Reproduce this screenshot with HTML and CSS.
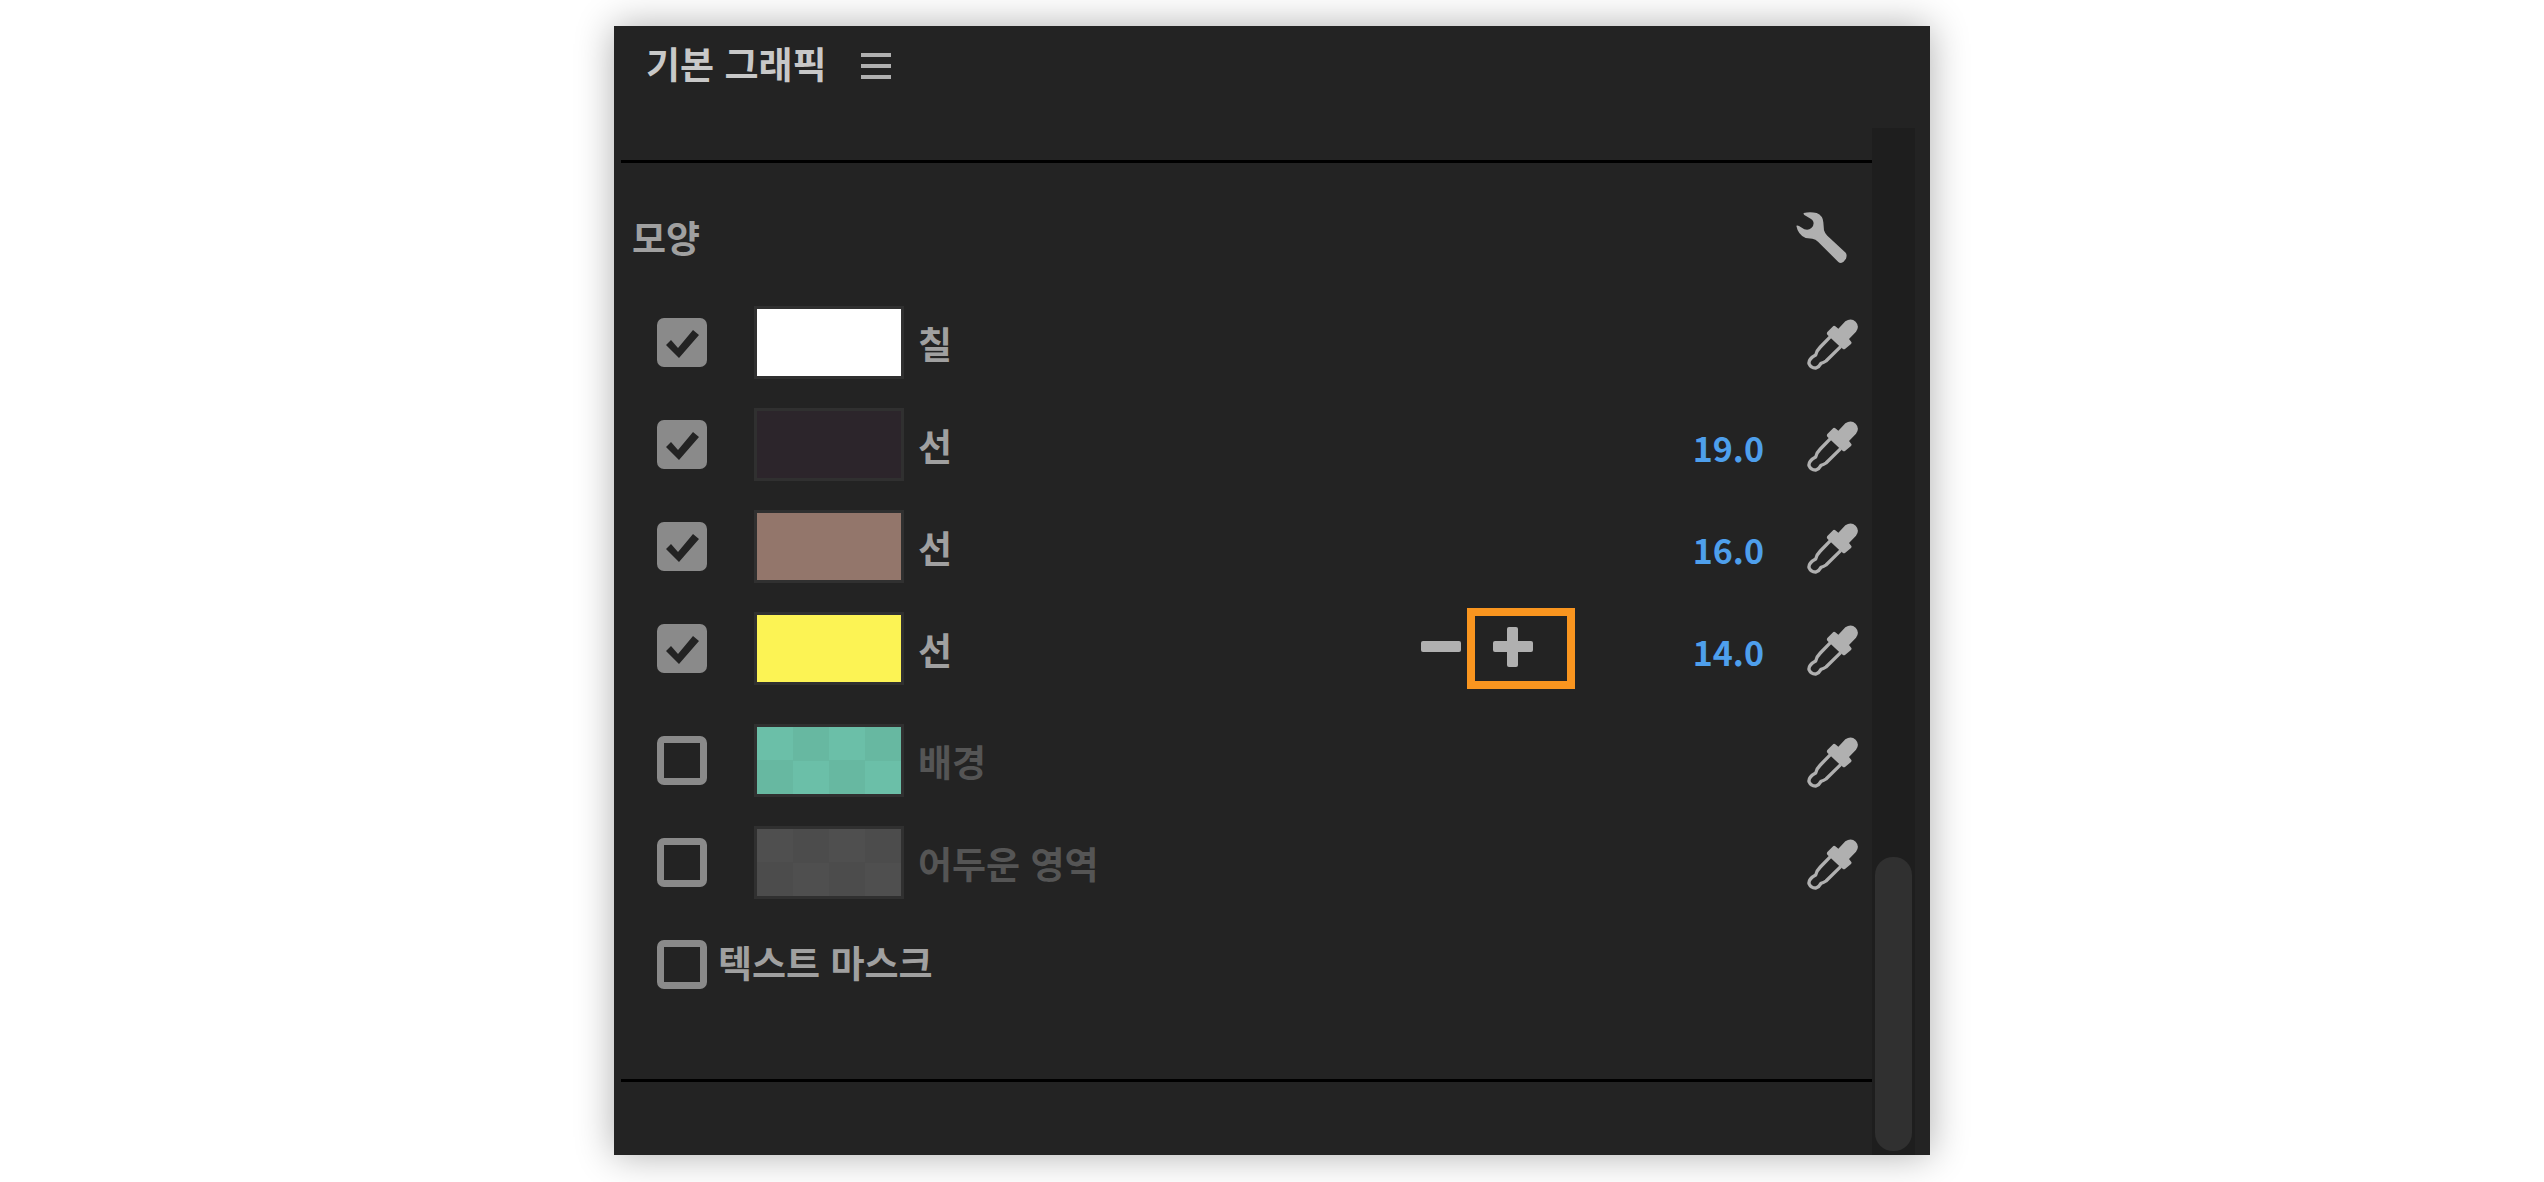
FILE: index.html
```html
<!DOCTYPE html>
<html lang="ko">
<head>
  <meta charset="UTF-8">
  <title>기본 그래픽</title>
  <link rel="stylesheet" href="styles.css">
</head>
<body>
  <svg class="sprite" aria-hidden="true">
    <symbol id="icon-dropper" viewBox="0 0 153 153">
      <path d="M71 52 L40 84 Q28 96 26 108 Q4 120 6 134 Q12 148 27 147 Q36 144 42 133 Q50 131 57 126 L101 83" fill="none" stroke="currentColor" stroke-width="10" stroke-linejoin="round"/>
      <path d="M61 39 L79 21 Q82 19 85 22 L94 29 L115 7 Q132 -5 146 8 Q159 22 147 38 L126 60 L133 69 Q135 72 132 75 L114 90 Q110 92 107 89 L96 80 L72 58 L61 47 Q58 43 61 39 Z" fill="currentColor"/>
    </symbol>
    <symbol id="icon-wrench" viewBox="0 0 153 153">
      <path d="M23 3 Q42 -1 62 3 Q81 11 82 31 L84 55 Q86 63 94 71 L149 122 Q154 128 150 140 Q144 150 135 153 Q130 153 127 150 L66 89 Q59 81 49 80 L29 78 Q6 68 1 41 Q5 39 9 42 L25 52 Q38 56 46 48 Q55 40 52 29 Q50 23 44 20 L25 9 Q22 6 23 3 Z" fill="currentColor"/>
    </symbol>
  </svg>

  <section class="panel">
    <header class="panel-header">
      <h1>기본 그래픽</h1>
      <button class="menu-button" aria-label="패널 메뉴"><span></span><span></span><span></span></button>
    </header>

    <div class="panel-body">
      <div class="panel-content">
        <div class="appearance">
          <div class="section-header">
            <h2>모양</h2>
            <button class="icon-button" aria-label="설정"><svg><use href="#icon-wrench"/></svg></button>
          </div>

          <div class="row">
            <input type="checkbox" id="fill" checked>
            <button class="swatch fill-white" aria-label="칠 색상"></button>
            <label for="fill">칠</label>
            <button class="icon-button" aria-label="스포이드"><svg><use href="#icon-dropper"/></svg></button>
          </div>
          <div class="row">
            <input type="checkbox" id="stroke-1" checked>
            <button class="swatch stroke-dark" aria-label="선 색상"></button>
            <label for="stroke-1">선</label>
            <span class="value">19.0</span>
            <button class="icon-button" aria-label="스포이드"><svg><use href="#icon-dropper"/></svg></button>
          </div>
          <div class="row">
            <input type="checkbox" id="stroke-2" checked>
            <button class="swatch stroke-brown" aria-label="선 색상"></button>
            <label for="stroke-2">선</label>
            <span class="value">16.0</span>
            <button class="icon-button" aria-label="스포이드"><svg><use href="#icon-dropper"/></svg></button>
          </div>
          <div class="row">
            <input type="checkbox" id="stroke-3" checked>
            <button class="swatch stroke-yellow" aria-label="선 색상"></button>
            <label for="stroke-3">선</label>
            <div class="stroke-actions">
              <button class="remove" aria-label="선 제거"></button>
              <div class="highlighted">
                <button class="add" aria-label="선 추가"></button>
              </div>
            </div>
            <span class="value">14.0</span>
            <button class="icon-button" aria-label="스포이드"><svg><use href="#icon-dropper"/></svg></button>
          </div>
          <div class="row disabled group-start">
            <input type="checkbox" id="background">
            <button class="swatch checker background-green" aria-label="배경 색상"></button>
            <label for="background">배경</label>
            <button class="icon-button" aria-label="스포이드"><svg><use href="#icon-dropper"/></svg></button>
          </div>
          <div class="row disabled">
            <input type="checkbox" id="shadow">
            <button class="swatch checker shadow-gray" aria-label="어두운 영역 색상"></button>
            <label for="shadow">어두운 영역</label>
            <button class="icon-button" aria-label="스포이드"><svg><use href="#icon-dropper"/></svg></button>
          </div>
          <div class="row mask-row">
            <input type="checkbox" id="text-mask">
            <label for="text-mask">텍스트 마스크</label>
          </div>
        </div>
      </div>
      <div class="scrollbar"><div class="scrollbar-thumb"></div></div>
    </div>
  </section>
</body>
</html>
```
FILE: styles.css
```css
:root {
  --panel-bg: #232323;
  --track-bg: #1e1e1e;
  --thumb-bg: #303030;
  --title-color: #c8c8c8;
  --text-color: #a0a0a0;
  --disabled-color: #555555;
  --icon-color: #b0b0b0;
  --checkbox-color: #8a8a8a;
  --swatch-border: #303030;
  --value-color: #4e9fec;
  --highlight-color: #f9951f;
}

* {
  box-sizing: border-box;
}

body {
  margin: 0;
  min-height: 100vh;
  padding: 26px 24px 27px;
  display: flex;
  justify-content: center;
  background-color: #ffffff;
  color: var(--text-color);
  font-family: "Noto Sans CJK KR", sans-serif;
  font-size: 37px;
  font-weight: 700;
  line-height: 48px;
}

h1, h2 {
  margin: 0;
  font-size: inherit;
  font-weight: inherit;
}

button {
  margin: 0;
  padding: 0;
  border: none;
  background: none;
  color: inherit;
  cursor: pointer;
}

.sprite {
  position: absolute;
  width: 0;
  height: 0;
}

.panel {
  width: 100%;
  max-width: 1316px;
  display: flex;
  flex-direction: column;
  background-color: var(--panel-bg);
  box-shadow: 0 0 36px rgba(0, 0, 0, 0.32);
}

.panel-header {
  height: 102px;
  padding: 13px 32px;
  display: flex;
  align-items: flex-start;
  gap: 34px;
  color: var(--title-color);
}

.menu-button {
  width: 30px;
  height: 54px;
  display: flex;
  flex-direction: column;
  justify-content: center;
  gap: 7px;
}

.menu-button span {
  width: 100%;
  height: 4px;
  background-color: var(--icon-color);
}

.panel-body {
  flex-grow: 1;
  display: flex;
  padding: 0 15px 0 7px;
}

.panel-content {
  flex-grow: 1;
  padding-top: 32px;
}

.appearance {
  padding: 40px 14px 78px 11px;
  border-top: 3px solid #000000;
  border-bottom: 3px solid #000000;
}

.section-header {
  height: 68px;
  margin-bottom: 35px;
  padding-right: 11px;
  display: flex;
  justify-content: space-between;
  align-items: center;
}

.row {
  height: 73px;
  margin-bottom: 29px;
  padding-left: 25px;
  display: flex;
  align-items: center;
}

.row.group-start {
  margin-top: 39px;
}

.row.disabled label {
  color: var(--disabled-color);
}

.row label {
  margin-right: auto;
  padding-left: 14px;
}

.row.mask-row {
  margin-bottom: 0;
}

.row.mask-row label {
  padding: 0 0 6px 11px;
}

input[type="checkbox"] {
  appearance: none;
  width: 50px;
  height: 49px;
  margin: 0;
  flex-shrink: 0;
  border: 7px solid var(--checkbox-color);
  border-radius: 7px;
}

input[type="checkbox"]:checked {
  border: none;
  background-color: var(--checkbox-color);
}

input[type="checkbox"]:checked::before {
  content: "";
  display: block;
  height: 100%;
  background-color: var(--panel-bg);
  clip-path: polygon(9px 27px, 14px 22px, 21px 30px, 36px 12px, 42px 17px, 22px 40px);
}

.swatch {
  width: 150px;
  height: 73px;
  margin-left: 47px;
  flex-shrink: 0;
  border: 3px solid var(--swatch-border);
}

.fill-white { background-color: #ffffff; }
.stroke-dark { background-color: #2c252b; }
.stroke-brown { background-color: #93766b; }
.stroke-yellow { background-color: #fcf354; }
.background-green { background-color: #6bbfa8; }
.shadow-gray { background-color: #4f4f4f; }

.checker {
  background-image: conic-gradient(transparent 25%, rgba(0, 0, 0, 0.04) 0 50%, transparent 0 75%, rgba(0, 0, 0, 0.04) 0);
  background-size: 72px 67px;
  background-position: 36px 0;
}

.icon-button {
  width: 51px;
  height: 51px;
  flex-shrink: 0;
  color: var(--icon-color);
}

.row .icon-button {
  margin-top: 4px;
}

.icon-button svg {
  display: block;
  width: 100%;
  height: 100%;
}

.value {
  padding-top: 7px;
  margin-right: 43px;
  color: var(--value-color);
  font-size: 34px;
}

.stroke-actions {
  margin-right: 160px;
  padding-bottom: 4px;
  display: flex;
  align-items: center;
  gap: 32px;
}

.remove, .add {
  display: block;
  position: relative;
  width: 40px;
  height: 40px;
}

.remove::before,
.add::before,
.add::after {
  content: "";
  position: absolute;
  top: 14px;
  left: 0;
  width: 40px;
  height: 11px;
  border-radius: 2px;
  background-color: var(--icon-color);
}

.add::after {
  top: 0;
  left: 14px;
  width: 11px;
  height: 40px;
}

.highlighted {
  position: relative;
}

.highlighted::before {
  content: "";
  position: absolute;
  inset: -19px -42px -22px -26px;
  border: 8px solid var(--highlight-color);
  pointer-events: none;
}

.scrollbar {
  width: 43px;
  flex-shrink: 0;
  padding: 0 3px 4px;
  display: flex;
  align-items: flex-end;
  background-color: var(--track-bg);
}

.scrollbar-thumb {
  width: 100%;
  height: 294px;
  border-radius: 18px;
  background-color: var(--thumb-bg);
}
```
